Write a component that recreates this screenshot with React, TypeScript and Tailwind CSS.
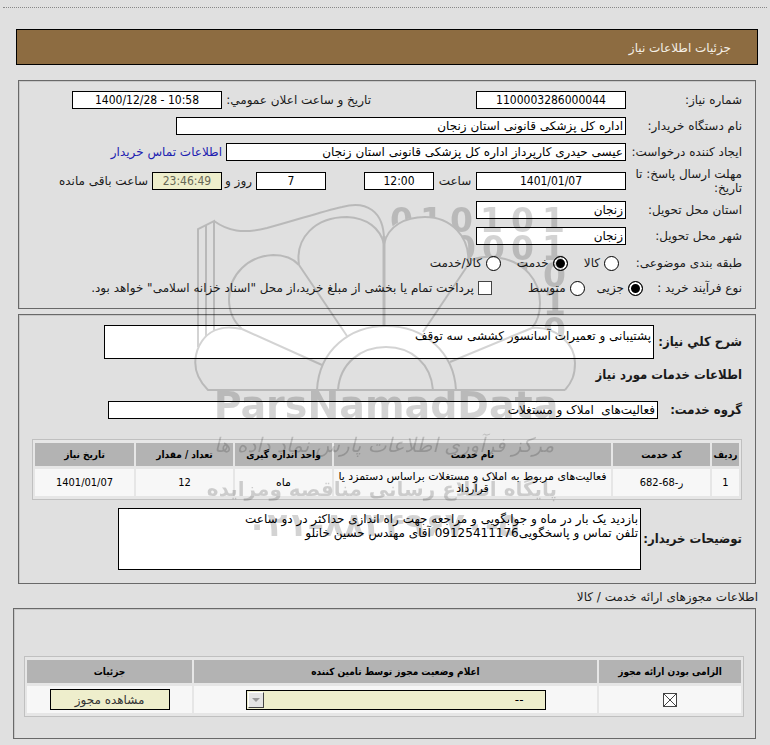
import React from 'react';
import clsx from 'clsx';

const serviceColumns = [
  { title: 'ردیف', width: 'w-[27px]' },
  { title: 'کد خدمت', width: 'w-[97px]' },
  { title: 'نام خدمت', width: '' },
  { title: 'واحد اندازه گیری', width: 'w-[97px]' },
  { title: 'تعداد / مقدار', width: 'w-[97px]' },
  { title: 'تاریخ نیاز', width: 'w-[99px]' },
];

const services = [
  ['1', 'ر-68-682', 'فعالیت‌های مربوط به املاک و مستغلات براساس دستمزد یا قرارداد', 'ماه', '12', '1401/01/07'],
];

const boxClass = 'border border-black outline-none';
const condensed = "font-['DejaVu_Sans_Condensed','DejaVu_Sans',sans-serif]";
const boldLabel = clsx(condensed, 'text-[13px] font-bold');

interface FieldProps {
  id: string;
  value: string;
  width: string;
  center?: boolean;
  muted?: boolean;
  className?: string;
}

const Field: React.FC<FieldProps> = ({ id, value, width, center, muted, className }) => (
  <input
    id={id}
    type="text"
    readOnly
    dir={center ? 'ltr' : 'rtl'}
    defaultValue={value}
    className={clsx(
      boxClass,
      'h-[18px] min-w-0 px-[2px] text-[12px]',
      muted ? 'bg-[#eeeecc] text-[#666655]' : 'bg-white text-black',
      center && clsx('text-center', condensed),
      width,
      className
    )}
  />
);

const Label: React.FC<{ htmlFor: string; children: React.ReactNode }> = ({ htmlFor, children }) => (
  <label htmlFor={htmlFor} className="w-[116px] shrink-0 leading-[14px]">
    {children}
  </label>
);

interface ChoiceProps {
  id: string;
  name: string;
  label: string;
  checked?: boolean;
}

const Choice: React.FC<ChoiceProps> = ({ id, name, label, checked }) => (
  <span className="flex items-center gap-1">
    <input
      id={id}
      name={name}
      type="radio"
      defaultChecked={checked}
      className="size-[15px] appearance-none rounded-full border border-black bg-white checked:bg-black checked:shadow-[inset_0_0_0_2px_white]"
    />
    <label htmlFor={id}>{label}</label>
  </span>
);

const Watermark: React.FC = () => {
  const petals =
    'M384 240 C388 224 405 217 425 217 C448 217 469 235 469 262 C480 256 490 256 500 258 C524 262 540 280 540 303 C540 313 537 322 532 328 C556 326 575 344 575 363 C575 375 572 382 565 390 H384 Z';
  const digits = [
    ['0', 390, 232], ['1', 420, 232], ['0', 450, 232], ['1', 480, 232], ['0', 511, 232], ['1', 542, 232],
    ['0', 453, 260], ['0', 482, 260], ['0', 511, 260], ['1', 542, 260],
    ['1', 512, 287], ['0', 543, 287],
    ['1', 543, 315],
    ['0', 543, 342],
  ] as const;

  return (
    <svg
      aria-hidden="true"
      viewBox="185 195 400 360"
      className="pointer-events-none absolute top-[195px] left-1/2 h-[360px] w-[400px] -translate-x-1/2 opacity-[0.17]"
    >
      <mask id="outside-petals">
        <rect x="185" y="195" width="400" height="360" fill="white" />
        <path d={petals} fill="black" />
      </mask>
      <g mask="url(#outside-petals)" fontFamily="DejaVu Sans" fontWeight="bold" fontSize="33" direction="ltr">
        {digits.map(([digit, x, y]) => (
          <text key={`${x}-${y}`} x={x} y={y}>{digit}</text>
        ))}
      </g>
      <g fill="none" stroke="black" strokeWidth="2">
        <path d="M198 347 V229 L214 221 V330 M206 225 V336" />
        <path d="M214 221 C228 231 242 234 267 228 C297 220 320 212 342 207 C366 200 384 211 384 240" />
        <path d="M384 236 V326" strokeWidth="3" />
        <path d="M299 265 C295 238 315 217 347 217 C367 218 380 228 384 244" />
        <path d="M299 265 C292 257 282 255 273 255 C249 256 229 274 229 299 C229 313 234 322 242 329" />
        <path d="M299 265 L347 336 M242 329 L322 365" />
        <path d="M242 329 C220 324 206 332 199 346 C192 362 195 377 208 390 H565" />
        <path d="M384 244 C388 226 405 217 425 217 C450 217 471 236 468 265" />
        <path d="M468 265 L423 332" />
        <path d="M472 260 C482 256 490 256 500 258 C524 262 540 280 540 303 C540 313 537 322 532 328" />
        <path d="M532 328 L450 362 M532 328 C556 326 575 344 575 363 C575 375 572 382 565 390" />
        <path d="M317 390 C319 350 350 326 386 326 C424 326 454 352 456 390 M338 390 C340 363 361 347 386 347 C412 347 431 364 433 390" />
      </g>
      <g textAnchor="middle" fontFamily="DejaVu Sans">
        <text x="386" y="418" fontSize="38" fontWeight="bold" direction="ltr">ParsNamadData</text>
        <text x="384" y="452" fontSize="20" fontStyle="italic" direction="rtl">مرکز فرآوری اطلاعات پارس نماد داده ها</text>
        <text x="382" y="496" fontSize="20" fontWeight="bold" direction="rtl">پایگاه اطلاع رسانی مناقصه ومزایده</text>
        <text x="383" y="536" fontSize="33" fontWeight="bold" direction="ltr">۰۲۱–۸۸۳۴۹۶۷۰-۵</text>
      </g>
    </svg>
  );
};

const panelClass = 'border border-[#696969] shadow-[inset_1px_1px_0_#c8c8c8]';
const thClass = clsx(condensed, 'h-[23px] bg-[#b3b3b3] p-0 text-center text-[10px] font-bold whitespace-nowrap text-black');
const tdClass = 'bg-[#f7f7f7] px-1 py-0 text-center';

const NeedInfo: React.FC = () => (
  <section className={clsx(panelClass, 'mt-[15px] mr-[14px] ml-[18px] min-h-[229px] pt-[10px] pr-[13px] pl-4')}>
    <div className="flex items-center">
      <Label htmlFor="need-number">شماره نیاز:</Label>
      <Field id="need-number" value="1100003286000044" width="w-[150px]" center />
      <label htmlFor="announce" className="mr-[105px] w-[149px]">تاریخ و ساعت اعلان عمومي:</label>
      <Field id="announce" value="1400/12/28 - 10:58" width="w-[150px]" center />
    </div>
    <div className="mt-2 flex items-center">
      <Label htmlFor="buyer">نام دستگاه خریدار:</Label>
      <Field id="buyer" value="اداره کل پزشکی قانونی استان زنجان" width="w-[450px]" />
    </div>
    <div className="mt-2 flex items-center">
      <Label htmlFor="creator">ایجاد کننده درخواست:</Label>
      <Field id="creator" value="عیسی حیدری کارپرداز اداره کل پزشکی قانونی استان زنجان" width="w-[400px]" />
      <a href="#contact" className="mr-1 text-[#2020b0]">اطلاعات تماس خریدار</a>
    </div>
    <div className="mt-[6px] flex h-7 items-center">
      <Label htmlFor="deadline">مهلت ارسال پاسخ: تا تاریخ:</Label>
      <Field id="deadline" value="1401/01/07" width="w-[150px]" center />
      <label htmlFor="hour" className="w-[42px] text-center">ساعت</label>
      <Field id="hour" value="12:00" width="w-[70px]" center />
      <Field id="days" value="7" width="w-[70px]" center className="mr-[38px]" />
      <label htmlFor="days" className="w-[34px] pr-1 whitespace-nowrap">روز و</label>
      <Field id="left" value="23:46:49" width="w-[70px]" center muted />
      <label htmlFor="left" className="pr-1">ساعت باقی مانده</label>
    </div>
    <div className="mt-[6px] flex items-center">
      <Label htmlFor="province">استان محل تحویل:</Label>
      <Field id="province" value="زنجان" width="w-[150px]" />
    </div>
    <div className="mt-2 flex items-center">
      <Label htmlFor="city">شهر محل تحویل:</Label>
      <Field id="city" value="زنجان" width="w-[150px]" />
    </div>
    <div className="mt-2 flex h-5 items-center gap-4">
      <span className="w-[107px]">طبقه بندی موضوعی:</span>
      <Choice id="goods" name="subject" label="کالا" />
      <Choice id="service" name="subject" label="خدمت" checked />
      <Choice id="both" name="subject" label="کالا/خدمت" />
    </div>
    <div className="mt-[5px] flex h-5 items-center">
      <span className="w-[99px]">نوع فرآیند خرید :</span>
      <div className="flex gap-3">
        <Choice id="minor" name="process" label="جزیی" checked />
        <Choice id="medium" name="process" label="متوسط" />
      </div>
      <input id="treasury" type="checkbox" className="mr-9 size-[14px] appearance-none border border-[#444] bg-white" />
      <label htmlFor="treasury" className="mr-1">
        پرداخت تمام یا بخشی از مبلغ خرید،از محل "اسناد خزانه اسلامی" خواهد بود.
      </label>
    </div>
  </section>
);

const ServiceInfo: React.FC = () => (
  <section className={clsx(panelClass, 'mt-[5px] mr-[14px] ml-[18px] min-h-[270px] pt-[10px] pr-[13px] pl-[13px]')}>
    <div className="flex items-center">
      <label htmlFor="summary" className={clsx(boldLabel, 'w-[88px]')}>شرح کلي نیاز:</label>
      <textarea
        id="summary"
        readOnly
        defaultValue="پشتیبانی و تعمیرات آسانسور کششی سه توقف"
        className={clsx(boxClass, 'h-[34px] w-[550px] resize-none bg-white px-[2px] pt-[2px] leading-4 text-black')}
      />
    </div>
    <h2 className={clsx(boldLabel, 'mt-[6px] h-5 leading-5')}>اطلاعات خدمات مورد نیاز</h2>
    <div className="mt-4 flex items-center">
      <label htmlFor="group" className={clsx(boldLabel, 'w-[84px]')}>گروه خدمت:</label>
      <Field id="group" value="فعالیت‌های  املاک و مستغلات" width="w-[550px]" />
    </div>
    <table className="mt-5 w-full table-fixed border-separate border-spacing-x-[2px] border-spacing-y-[3px] border border-[#c0c0c0] bg-[#e6e6e6]">
      <thead>
        <tr>
          {serviceColumns.map((column) => (
            <th key={column.title} className={clsx(thClass, column.width)}>{column.title}</th>
          ))}
        </tr>
      </thead>
      <tbody>
        {services.map((row) => (
          <tr key={row[0]}>
            {row.map((cell, index) => (
              <td
                key={index}
                className={clsx(tdClass, 'h-[27px] text-[11px] leading-3 text-black', index !== 2 && index !== 3 && condensed)}
              >
                {cell}
              </td>
            ))}
          </tr>
        ))}
      </tbody>
    </table>
    <div className="mt-2 flex items-center">
      <label htmlFor="notes" className={clsx(boldLabel, 'w-[101px]')}>توضیحات خریدار:</label>
      <textarea
        id="notes"
        readOnly
        defaultValue={'بازدید یک بار در ماه و جوابگویی و مراجعه جهت راه اندازی حداکثر در دو ساعت\nتلفن تماس و پاسخگویی09125411176 آقای مهندس حسین خانلو'}
        className={clsx(boxClass, 'h-[62px] w-[523px] resize-none bg-white px-[2px] pt-[3px] leading-[14px] text-black')}
      />
    </div>
  </section>
);

const Licenses: React.FC = () => (
  <>
    <h2 className="mt-1 mr-3 h-5 leading-[18px]">اطلاعات مجوزهای ارائه خدمت / کالا</h2>
    <section className={clsx(panelClass, 'mr-[14px] ml-[13px] min-h-[131px] pt-[47px] pr-[11px] pl-[10px]')}>
      <table className="w-full table-fixed border-separate border-spacing-x-[2px] border-spacing-y-[3px] border border-[#c0c0c0] bg-[#e6e6e6]">
        <thead>
          <tr>
            <th className={clsx(thClass, 'w-[142px]')}>الزامی بودن ارائه مجوز</th>
            <th className={thClass}>اعلام وضعیت مجوز توسط تامین کننده</th>
            <th className={clsx(thClass, 'w-[165px]')}>جزئیات</th>
          </tr>
        </thead>
        <tbody>
          <tr>
            <td className={clsx(tdClass, 'h-[27px]')}>
              <span className="relative mx-auto block size-[14px]">
                <input
                  type="checkbox"
                  defaultChecked
                  disabled
                  aria-label="الزامی بودن ارائه مجوز"
                  className="block size-[14px] appearance-none border border-[#444] bg-white"
                />
                <svg viewBox="0 0 14 14" className="pointer-events-none absolute inset-0 size-[14px]" aria-hidden="true">
                  <path d="M1 1 L13 13 M13 1 L1 13" stroke="#444" strokeWidth="1" />
                </svg>
              </span>
            </td>
            <td className={tdClass}>
              <span className="relative mx-auto block h-5 w-[300px]">
                <select
                  disabled
                  aria-label="اعلام وضعیت مجوز توسط تامین کننده"
                  className="block h-5 w-full appearance-none border border-black bg-[#eeeecc] pr-[21px] text-[12px] text-black opacity-100"
                >
                  <option>--</option>
                </select>
                <span className="pointer-events-none absolute top-[2px] left-[2px] flex h-4 w-4 items-center justify-center border border-t-white border-r-[#444] border-b-[#444] border-l-white bg-[#e4e4e4]">
                  <svg viewBox="0 0 8 4" className="h-1 w-2" aria-hidden="true">
                    <path d="M0 0 H8 L4 4 Z" fill="#999" />
                  </svg>
                </span>
              </span>
            </td>
            <td className={tdClass}>
              <button type="button" className="mx-auto block h-[21px] w-[120px] border border-black bg-[#eeeecc] text-[12px] leading-none text-[#333]">
                مشاهده مجوز
              </button>
            </td>
          </tr>
        </tbody>
      </table>
    </section>
  </>
);

const App: React.FC = () => {
  return (
    <main
      dir="rtl"
      className="relative min-h-screen bg-[#e0e0e0] pt-[7px] pb-[6px] font-['DejaVu_Sans',sans-serif] text-[12px] leading-[18px] text-[#1a1a1a]"
    >
      <div className="mx-[3px] border-t border-dotted border-[#888]" />
      <h1 className="mt-[21px] mr-3 ml-4 h-9 border border-black bg-[#8d6c41] pr-[26px] leading-[36px] text-[#f4efe6]">
        جزئیات اطلاعات نیاز
      </h1>
      <NeedInfo />
      <ServiceInfo />
      <Licenses />
      <Watermark />
    </main>
  );
};

export default App;
